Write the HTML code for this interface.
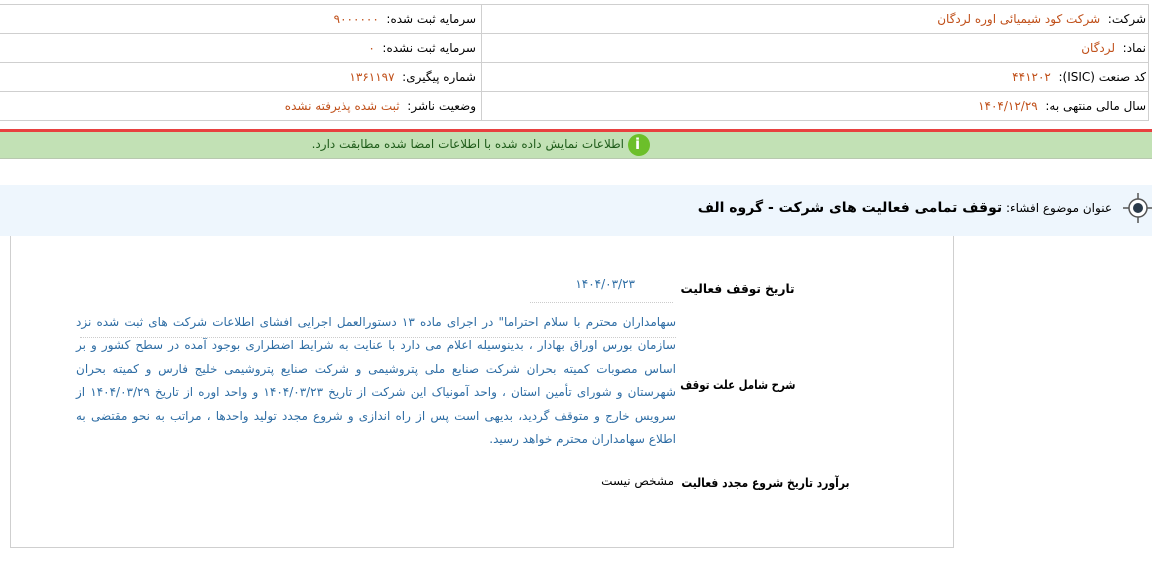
<!DOCTYPE html>
<html dir="rtl"><head><meta charset="utf-8"><style>
*{margin:0;padding:0;box-sizing:border-box}
body{width:1152px;height:567px;background:#fff;font-family:"DejaVu Sans",sans-serif;font-size:12px;color:#000;position:relative;overflow:hidden}
.a{position:absolute;white-space:nowrap}
.hl{position:absolute;left:0;width:1149px;height:1px;background:#cfcfcf}
.vl{position:absolute;width:1px;background:#cfcfcf}
.v{color:#c0501a}
.lab{font-weight:bold;font-size:12.5px;transform-origin:right center}
.bl{color:#2e6da4}
</style></head><body>
<div class="hl" style="top:4px"></div>
<div class="hl" style="top:33px"></div>
<div class="hl" style="top:62px"></div>
<div class="hl" style="top:91px"></div>
<div class="hl" style="top:120px"></div>
<div class="vl" style="left:481px;top:4px;height:117px"></div>
<div class="vl" style="left:1148px;top:4px;height:117px"></div>

<div class="a" style="right:6px;top:12px">شرکت:&nbsp; <span class="v">شرکت کود شیمیائی اوره لردگان</span></div>
<div class="a" style="right:6px;top:41px">نماد:&nbsp; <span class="v">لردگان</span></div>
<div class="a" style="right:6px;top:70px">کد صنعت (ISIC):&nbsp; <span class="v">۴۴۱۲۰۲</span></div>
<div class="a" style="right:6px;top:99px">سال مالی منتهی به:&nbsp; <span class="v">۱۴۰۴/۱۲/۲۹</span></div>

<div class="a" style="right:676px;top:12px">سرمایه ثبت شده:&nbsp; <span class="v">۹۰۰۰۰۰۰</span></div>
<div class="a" style="right:676px;top:41px">سرمایه ثبت نشده:&nbsp; <span class="v">۰</span></div>
<div class="a" style="right:676px;top:70px">شماره پیگیری:&nbsp; <span class="v">۱۳۶۱۱۹۷</span></div>
<div class="a" style="right:676px;top:99px">وضعیت ناشر:&nbsp; <span class="v">ثبت شده پذیرفته نشده</span></div>

<div style="position:absolute;left:0;top:129px;width:1152px;height:3px;background:#e8403f"></div>
<div style="position:absolute;left:0;top:132px;width:1152px;height:27px;background:#c2e1b5;border-bottom:1px solid #b8c8b0"></div>
<div style="position:absolute;left:628px;top:134px;width:22px;height:22px;border-radius:50%;background:#6cbf2a"></div>
<div class="a" style="left:635px;top:135px;color:#fff;font-weight:bold;font-size:15px">i</div>
<div class="a" style="right:528px;top:137px;color:#1f5c1a">اطلاعات نمایش داده شده با اطلاعات امضا شده مطابقت دارد.</div>

<div style="position:absolute;left:0;top:185px;width:1152px;height:51px;background:#eef6fd"></div>
<svg style="position:absolute;left:1123px;top:193px" width="30" height="30" viewBox="0 0 30 30">
<circle cx="15" cy="15" r="9" fill="#fff" stroke="#555" stroke-width="1.5"/>
<circle cx="15" cy="15" r="5" fill="#2a3a4a"/>
<path d="M15 0v6M15 24v6M0 15h6M24 15h6" stroke="#555" stroke-width="1.5"/>
</svg>
<div class="a" style="right:40px;top:200px;font-size:12px">عنوان موضوع افشاء: <b style="font-size:14px">توقف تمامی فعالیت های شرکت - گروه الف</b></div>

<div style="position:absolute;left:10px;top:236px;width:944px;height:312px;border:1px solid #cfcfcf;border-top:none"></div>

<div class="a lab" style="right:357px;top:281px;transform:scaleX(0.97)">تاریخ توقف فعالیت</div>
<div class="a bl" style="right:517px;top:277px">۱۴۰۴/۰۳/۲۳</div>
<div style="position:absolute;left:530px;top:302px;width:143px;border-top:1px dotted #ccc"></div>

<div class="a lab" style="right:357px;top:377px;transform:scaleX(0.82)">شرح شامل علت توقف</div>
<div style="position:absolute;left:76px;top:311px;width:600px;line-height:23.4px;color:#2e6da4;text-align:justify;text-align-last:right;font-size:12px">سهامداران محترم با سلام احتراما" در اجرای ماده ۱۳ دستورالعمل اجرایی افشای اطلاعات شرکت های ثبت شده نزد سازمان بورس اوراق بهادار ، بدینوسیله اعلام می دارد با عنایت به شرایط اضطراری بوجود آمده در سطح کشور و بر اساس مصوبات کمیته بحران شرکت صنایع ملی پتروشیمی و شرکت صنایع پتروشیمی خلیج فارس و کمیته بحران شهرستان و شورای تأمین استان ، واحد آمونیاک این شرکت از تاریخ ۱۴۰۴/۰۳/۲۳ و واحد اوره از تاریخ ۱۴۰۴/۰۳/۲۹ از سرویس خارج و متوقف گردید، بدیهی است پس از راه اندازی و شروع مجدد تولید واحدها ، مراتب به نحو مقتضی به اطلاع سهامداران محترم خواهد رسید.</div>
<div style="position:absolute;left:80px;top:337px;width:596px;border-top:1px dotted #ccc"></div>

<div class="a lab" style="right:302px;top:475px;transform:scaleX(0.86)">برآورد تاریخ شروع مجدد فعالیت</div>
<div class="a" style="right:478px;top:474px">مشخص نیست</div>
</body></html>
